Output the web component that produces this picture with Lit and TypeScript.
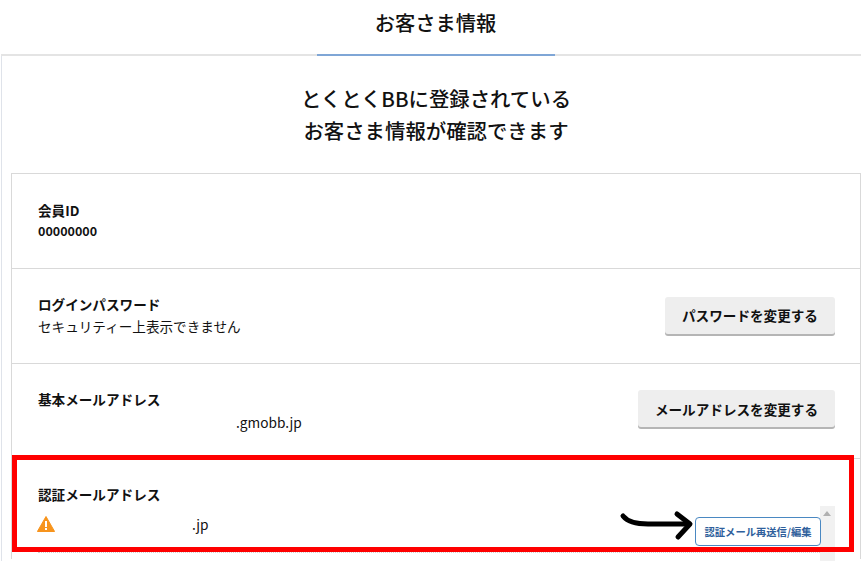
import { LitElement, html, css } from "lit";
import { customElement } from "lit/decorators.js";

@customElement("app-root")
export class AppRoot extends LitElement {
  static styles = css`
    :host {
      display: block;
      position: relative;
      width: 861px;
      height: 561px;
      overflow: hidden;
      background: #fff;
      font-family: "Noto Sans CJK JP", "Noto Sans", sans-serif;
      color: #111;
    }
    .page {
      height: 561px;
      display: flex;
      flex-direction: column;
    }
    .tabbar {
      flex: none;
      height: 56px;
      box-sizing: border-box;
      border-bottom: 2px solid #e4e4e4;
      display: flex;
      justify-content: center;
      margin-left: 1px;
      padding-left: 1px;
    }
    .tab {
      width: 238px;
      height: 56px;
      box-sizing: border-box;
      border-bottom: 2px solid #7fa6d6;
      text-align: center;
      font-size: 20.3px;
      line-height: 28px;
      padding-top: 8px;
      font-weight: 500;
      margin-left: 8px;
    }
    .body {
      flex: 1;
      min-height: 0;
      margin-left: 1px;
      border-left: 1px solid #dfe3ea;
      padding: 26px 0 0 9px;
      overflow: hidden;
    }
    .headline {
      text-align: center;
      font-size: 20.4px;
      line-height: 32px;
      font-weight: 500;
      margin: 0 0 27px;
    }
    .card {
      border: 1px solid #d9d9d9;
      border-bottom: none;
    }
    .row {
      height: 95px;
      box-sizing: border-box;
      border-bottom: 1px solid #d9d9d9;
      padding: 0 25px 0 26px;
      display: flex;
      align-items: center;
      justify-content: space-between;
    }
    .text {
      padding-bottom: 2px;
    }
    .row.last {
      border-bottom: none;
      height: 100px;
      align-items: flex-start;
      padding-top: 25px;
      position: relative;
    }
    .label {
      font-size: 13.6px;
      line-height: 20px;
      font-weight: 700;
    }
    .value {
      font-size: 13.6px;
      line-height: 20px;
      margin-top: 2px;
      min-height: 20px;
    }
    .id {
      font-size: 12.5px;
      font-weight: 700;
      margin-top: 1px;
    }
    .mail {
      font-size: 13.7px;
      padding-left: 198px;
      margin-top: 3px;
    }
    .mail2 {
      font-size: 13.7px;
      display: flex;
      align-items: center;
      margin-top: 10px;
    }
    .warn {
      width: 18px;
      height: 16px;
      margin-right: 137px;
      margin-left: -1px;
    }
    .btn {
      background: #eeeeee;
      border: none;
      border-radius: 3px;
      box-shadow: 0 2px 0 #b5b5b5;
      height: 37px;
      font-family: inherit;
      font-size: 13.6px;
      font-weight: 700;
      color: #111;
      padding: 0;
      text-align: center;
      margin-top: -2px;
    }
    .btn.pw {
      width: 170px;
    }
    .btn.ml {
      width: 197px;
      margin-top: -5px;
    }
    .resend-wrap {
      position: absolute;
      right: 25px;
      top: 47px;
      width: 140px;
      height: 60px;
    }
    .scroll {
      position: absolute;
      left: 125px;
      top: 0;
      width: 15px;
      height: 60px;
      background: #f1f1f1;
    }
    .scroll::before {
      content: "";
      position: absolute;
      left: 3px;
      top: 5px;
      border: 4px solid transparent;
      border-top: none;
      border-bottom: 5px solid #b0b0b0;
    }
    .resend {
      position: relative;
      z-index: 1;
      display: block;
      width: 126px;
      height: 29px;
      margin-top: 11px;
      background: #fff;
      border: 1px solid #4a88c2;
      border-radius: 4px;
      box-sizing: border-box;
      font-family: inherit;
      font-size: 10.3px;
      font-weight: 700;
      color: #2f5f9c;
      padding: 0;
    }
    .dots {
      position: absolute;
      left: 26px;
      right: 40px;
      top: 93px;
      border-top: 1px dotted #d0d0d0;
    }
    .highlight {
      position: absolute;
      left: 12px;
      top: 455px;
      width: 842px;
      height: 97px;
      box-sizing: border-box;
      border: 5px solid #ff0000;
      pointer-events: none;
    }
    .arrow {
      position: absolute;
      left: 618px;
      top: 509px;
      width: 76px;
      height: 34px;
    }
  `;

  render() {
    return html`
      <div class="page">
        <div class="tabbar"><div class="tab">お客さま情報</div></div>
        <div class="body">
          <h1 class="headline">とくとくBBに登録されている<br />お客さま情報が確認できます</h1>
          <div class="card">
            <div class="row">
              <div class="text">
                <div class="label">会員ID</div>
                <div class="value id">00000000</div>
              </div>
            </div>
            <div class="row">
              <div class="text">
                <div class="label">ログインパスワード</div>
                <div class="value">セキュリティー上表示できません</div>
              </div>
              <button class="btn pw">パスワードを変更する</button>
            </div>
            <div class="row">
              <div class="text">
                <div class="label">基本メールアドレス</div>
                <div class="value mail">.gmobb.jp</div>
              </div>
              <button class="btn ml">メールアドレスを変更する</button>
            </div>
            <div class="row last">
              <div>
                <div class="label">認証メールアドレス</div>
                <div class="mail2">
                  <svg class="warn" viewBox="0 0 18 16">
                    <path d="M9 .5 17.6 15.500H.4Z" fill="#f7941d" stroke="#f7941d" stroke-linejoin="round" />
                    <rect x="8" y="5" width="2" height="6" fill="#fff" />
                    <rect x="8" y="12" width="2" height="2" fill="#fff" />
                  </svg>
                  <span>.jp</span>
                </div>
              </div>
              <div class="resend-wrap">
                <div class="scroll"></div>
                <button class="resend">認証メール再送信/編集</button>
              </div>
              <div class="dots"></div>
            </div>
          </div>
        </div>
      </div>
      <div class="highlight"></div>
      <svg class="arrow" viewBox="0 0 76 34" fill="none" stroke="#000" stroke-width="5" stroke-linecap="round" stroke-linejoin="round">
        <path d="M5 7C9 12 18 15 30 15L71 15" />
        <path d="M59 5 72 15 60 28" />
      </svg>
    `;
  }
}
